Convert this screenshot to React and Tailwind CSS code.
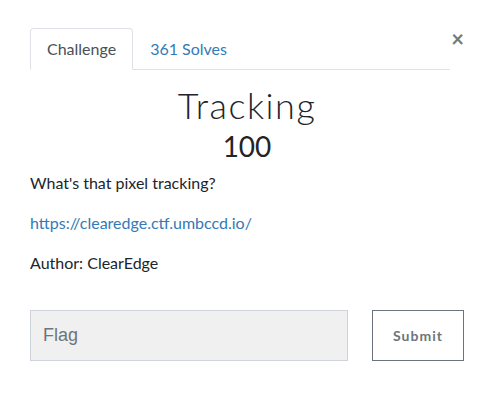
import React from 'react';

const App = () => {
  return (
    <div className="min-h-screen bg-white font-['Lato','Noto_Sans',sans-serif] text-[#212529]">
      <div className="px-[30px] pt-[28px]">
        {/* Tabs header */}
        <div className="flex items-start">
          <nav className="flex flex-1 border-b border-[#dee2e6]">
            <button className="-mb-px rounded-t border border-[#dee2e6] border-b-white bg-white px-4 py-2 text-base leading-6 text-[#495057]">
              Challenge
            </button>
            <button className="-mb-px border border-transparent px-4 py-2 text-base leading-6 text-[#337ab7]">
              361 Solves
            </button>
          </nav>
          <button className="w-[14px] text-right text-[22px] font-bold leading-none text-[#777]">
            ×
          </button>
        </div>

        {/* Challenge body */}
        <div className="pt-[14px]">
          <h3 className="text-center text-[36px] font-light leading-[1.2] tracking-[1.5px] text-[#212529]">
            Tracking
          </h3>
          <h4 className="mt-[3px] mb-[7px] text-center text-[28px] leading-[1.2] text-[#212529]">100</h4>
          <p className="mb-4 text-base leading-6">What's that pixel tracking?</p>
          <p className="mb-4 text-base leading-6">
            <a href="#" className="text-[#337ab7]">
              https://clearedge.ctf.umbccd.io/
            </a>
          </p>
          <p className="mb-4 text-base leading-6">Author: ClearEdge</p>

          <div className="mt-[35px] flex gap-6">
            <input
              type="text"
              placeholder="Flag"
              className="h-[51px] flex-1 border border-[#ced4da] bg-[#f0f0f0] px-3 font-['Liberation_Sans',Arial,sans-serif] text-[18px] text-[#495057] placeholder:text-[#6c757d] outline-none"
            />
            <button className="h-[51px] w-[92px] border border-[#6c757d] bg-white text-[14px] font-bold tracking-[1px] text-[#6c757d]">
              Submit
            </button>
          </div>
        </div>
      </div>
    </div>
  );
};

export default App;
